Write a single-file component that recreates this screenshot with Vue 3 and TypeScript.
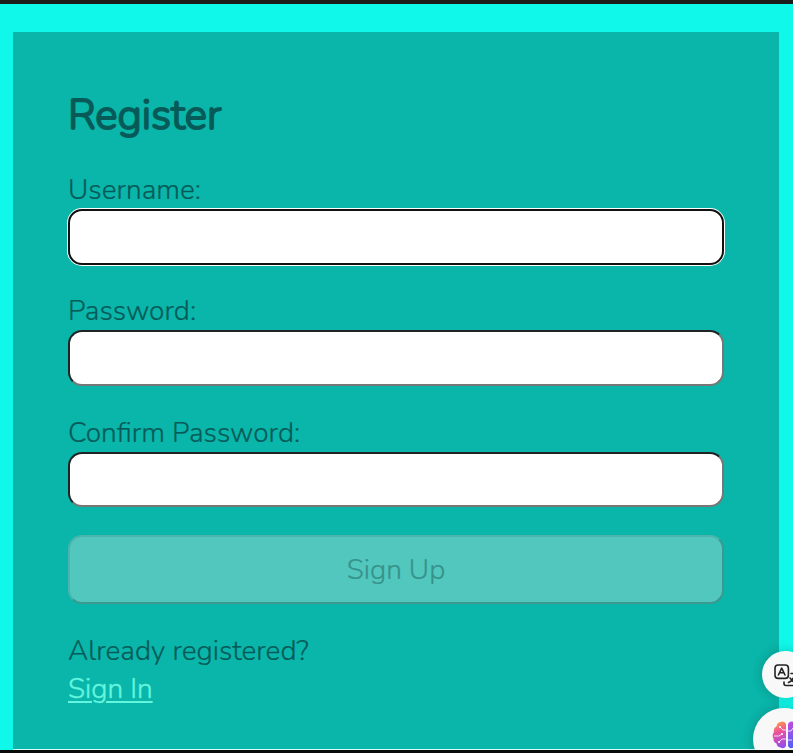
<script setup lang="ts">
import { ref } from 'vue'

interface Field {
  id: string
  label: string
  type: string
}

const fields: Field[] = [
  { id: 'username', label: 'Username:', type: 'text' },
  { id: 'password', label: 'Password:', type: 'password' },
  { id: 'confirm', label: 'Confirm Password:', type: 'password' },
]
const values = ref<Record<string, string>>({ username: '', password: '', confirm: '' })
const active = ref('username')
</script>

<template>
  <div class="page">
    <main class="panel">
      <h1>Register</h1>
      <form @submit.prevent>
        <div v-for="f in fields" :key="f.id" class="field">
          <label :for="f.id">{{ f.label }}</label>
          <input
            :id="f.id"
            v-model="values[f.id]"
            :type="f.type"
            :class="{ active: active === f.id }"
            autocomplete="off"
            @focus="active = f.id"
          />
        </div>
        <button type="submit" disabled>Sign Up</button>
      </form>
      <p class="already"><span>Already registered?</span><a href="#">Sign In</a></p>
    </main>
    <div class="bubble translate">
      <svg width="28" height="26" viewBox="0 0 28 26" fill="none" stroke="#222" stroke-width="1.6" stroke-linecap="round" stroke-linejoin="round">
        <rect x="1" y="1" width="13.4" height="13.4" rx="3.2" />
        <path d="M4.400 11 7.700 4.200 11 11M5.600 8.800h4.200" />
        <path d="M17 9.500h8M10 18v1.500q0 2 2 2H25" />
        <path d="M14.500 18.500q4-1.500 5.500-6M16 14l4 4.500" />
      </svg>
    </div>
    <div class="bubble brain">
      <svg width="32" height="28" viewBox="0 0 32 28" fill="none">
        <defs>
          <linearGradient id="lobeLeft" x1="3" y1="1" x2="12" y2="27" gradientUnits="userSpaceOnUse">
            <stop offset="0" stop-color="#ff9c3f" />
            <stop offset=".4" stop-color="#ee50a0" />
            <stop offset="1" stop-color="#8c4cf2" />
          </linearGradient>
          <linearGradient id="lobeRight" x1="17" y1="1" x2="24" y2="27" gradientUnits="userSpaceOnUse">
            <stop offset="0" stop-color="#c04be0" />
            <stop offset="1" stop-color="#4b62f5" />
          </linearGradient>
        </defs>
        <path d="M14 3Q12-.5 8.500 1 5 1.500 4.500 5.500 1 7 2 11-.5 14 1.500 17.500 1 21 4.500 22.500 5 26 8.500 26.500 12 28.500 14 25Z" fill="url(#lobeLeft)" />
        <path d="M16 3Q18-.5 21.500 1 25 1.500 25.500 5.500 29 7 28 11 30.500 14 28.500 17.500 29 21 25.500 22.500 25 26 21.500 26.500 18 28.500 16 25Z" fill="url(#lobeRight)" />
        <path d="M14 9h-3L8 6M2 15h5l3-2M14 18h-4l-3 3M16 10h3l2-3M16 19h4" stroke="#fff" stroke-width=".8" />
        <g fill="#fff"><circle cx="8" cy="6" r="1" /><circle cx="10" cy="13" r="1" /><circle cx="7" cy="21" r="1" /></g>
      </svg>
    </div>
  </div>
</template>

<style>
body {
  margin: 0;
  overflow: hidden;
}
</style>

<style scoped>
.page {
  box-sizing: border-box;
  position: relative;
  height: 753px;
  padding: 28px 14px 0 13px;
  border-top: 4px solid #1c1c1c;
  border-bottom: 3px solid #070c0b;
  background: #10f8ea;
  overflow: hidden;
  color: #065b59;
  font: 300 28px/38px Nunito, Lato, sans-serif;
  -webkit-text-stroke: 0.2px currentColor;
}
.panel {
  box-sizing: border-box;
  height: 718px;
  padding: 56px 55px 0;
  background: #0ab5a9;
  border-bottom: 1px solid #d9fffb;
}
h1 {
  margin: 0 0 28px;
  font-size: 42px;
  line-height: 55px;
  font-weight: 300;
  -webkit-text-stroke: 2px currentColor;
}
.field {
  display: flex;
  flex-direction: column;
  height: 121.3px;
}
label {
  height: 38px;
  width: max-content;
}
input {
  box-sizing: border-box;
  width: 100%;
  height: 55.5px;
  padding: 8px;
  border: 2px solid;
  border-color: #202424 #777 #777 #202424;
  border-radius: 14px;
  outline: none;
  background: #fff;
  font: inherit;
}
input.active {
  height: 56px;
  border-color: #111;
  box-shadow: 0 0 0 1px #fff;
}
button {
  box-sizing: border-box;
  display: block;
  width: 100%;
  height: 68.8px;
  padding: 1px 0 0;
  border: 2px solid;
  border-color: #4bb5ad #3c9890 #3c9890 #4bb5ad;
  border-radius: 14px;
  background: #51c7bd;
  color: #37928b;
  font: inherit;
}
.already {
  display: flex;
  flex-direction: column;
  align-items: flex-start;
  margin: 28.300px 0 0;
}
a {
  color: #64f5df;
  -webkit-text-stroke: 0.4px currentColor;
  text-decoration-thickness: 2px;
  text-underline-offset: 3px;
}
.bubble {
  position: absolute;
  box-sizing: border-box;
  border-radius: 50%;
  background: #f8f8f9;
  box-shadow: 0 0 12px rgb(0 0 0 / 20%);
}
.translate {
  left: 762px;
  top: 647px;
  width: 47px;
  height: 47px;
  padding: 11px 0 0 12px;
}
.brain {
  left: 753px;
  top: 704px;
  width: 62px;
  height: 62px;
  padding: 13px 0 0 19px;
}
</style>
